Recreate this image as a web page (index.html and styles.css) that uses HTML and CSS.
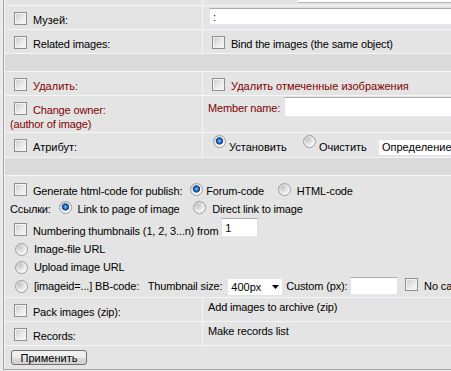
FILE: index.html
```html
<!DOCTYPE html>
<html lang="ru">
<head>
  <meta charset="UTF-8" />
  <meta name="viewport" content="width=device-width, initial-scale=1" />
  <title>Действия с изображениями</title>
  <link rel="stylesheet" href="styles.css">
</head>
<body>
  <div class="panel">
    <form class="opts">
      <div class="cell cut"></div>
      <div class="cell cut"><div class="cut-field"></div></div>

      <div class="cell"><input type="checkbox" class="cb"> Музей:</div>
      <div class="cell"><input type="text" class="txt museum" value=":"></div>

      <div class="cell" lang="en"><input type="checkbox" class="cb"> Related images:</div>
      <div class="cell" lang="en"><input type="checkbox" class="cb"> Bind the images (the same object)</div>

      <div class="cell blank"></div>

      <div class="cell red"><input type="checkbox" class="cb"> Удалить:</div>
      <div class="cell red"><input type="checkbox" class="cb"> Удалить отмеченные изображения</div>

      <div class="cell red" lang="en"><input type="checkbox" class="cb"> Change owner:<br>(author of image)</div>
      <div class="cell red owner" lang="en">
        <span class="owner-label">Member name:</span>
        <input type="text" class="txt owner-input">
      </div>

      <div class="cell"><input type="checkbox" class="cb"> Атрибут:</div>
      <div class="cell attr"><input type="radio" name="attr" class="rb" checked>Установить&nbsp;&nbsp; <input type="radio" name="attr" class="rb rb-next">Очистить&nbsp;&nbsp; <select class="sel"><option>Определение...</option></select></div>

      <div class="cell blank"></div>

      <div class="cell wide publish" lang="en">
        <div class="line l1"><input type="checkbox" class="cb"> Generate html-code for publish: <input type="radio" name="code" class="rb" checked>Forum-code&nbsp;&nbsp; <input type="radio" name="code" class="rb"> HTML-code</div>
        <div class="line l2">Ссылки: <input type="radio" name="link" class="rb" checked> Link to page of image&nbsp;&nbsp; <input type="radio" name="link" class="rb"> Direct link to image</div>
        <div class="line l3"><input type="checkbox" class="cb"> Numbering thumbnails (1, 2, 3...n) from <input type="text" class="txt num" value="1"></div>
        <div class="line l4"><input type="radio" name="src" class="rb"> Image-file URL</div>
        <div class="line l5"><input type="radio" name="src" class="rb"> Upload image URL</div>
        <div class="line l6"><input type="radio" name="src" class="rb"> [imageid=...] BB-code:&nbsp;&nbsp; Thumbnail size: <span class="size-box"><select class="size-sel"><option>400px</option></select><svg class="caret" width="7" height="4" viewBox="0 0 7 4"><path d="M0 0h7L3.5 4z"/></svg></span> Custom (px): <input type="text" class="txt custom"> <input type="checkbox" class="cb"> No cache</div>
      </div>

      <div class="cell" lang="en"><input type="checkbox" class="cb"> Pack images (zip):</div>
      <div class="cell note" lang="en">Add images to archive (zip)</div>

      <div class="cell" lang="en"><input type="checkbox" class="cb"> Records:</div>
      <div class="cell note" lang="en">Make records list</div>

      <div class="cell wide"><button type="submit" class="btn">Применить</button></div>
    </form>
  </div>
</body>
</html>
```

FILE: styles.css
```css
body {
  margin: 0;
  padding: 0 0 0 3px;
  background: #ececec;
  font-family: "Liberation Sans", Arial, sans-serif;
  font-size: 11px;
  color: #000;
  overflow: hidden;
}

/* english labels come out a bit wide next to the hinted original */
[lang="en"] {
  letter-spacing: -0.15px;
}

.panel {
  width: 620px;
  border-left: 1px solid #a3a3a3;
  border-bottom: 1px solid #a3a3a3;
}

.opts {
  display: grid;
  grid-template-columns: 197px 1fr;
  grid-template-rows: 5px 23px 23px 17px 23px 36px 24px 17px 121px 23px 23px 23px;
  gap: 1px;
  margin: 0;
  padding-left: 1px;
  background: #f5f5f5;
}

.cell {
  background: #e4e4e4;
  padding: 3px 5px 0;
  line-height: 14px;
  white-space: nowrap;
  overflow: hidden;
}

.cut {
  padding: 0;
}

.cut-field {
  margin-left: 95px;
  height: 2px;
  background: #fff;
  border-bottom: 1px solid #b5b5b5;
}

.blank {
  grid-column: 1 / -1;
  background: #dadada;
}

.wide {
  grid-column: 1 / -1;
}

.red {
  color: #800000;
}

.note {
  padding-top: 2px;
}

/* checkboxes and radios, Windows 7 look */
.cb, .rb {
  appearance: none;
  -webkit-appearance: none;
  box-sizing: border-box;
  width: 13px;
  height: 13px;
  margin: 3px 3px 0 4px;
  vertical-align: -1px;
  border: 1px solid #8f8f8f;
  background: linear-gradient(135deg, #c9cbcf 0%, #e9e9e9 55%, #fbfbfb 100%);
  box-shadow: inset 0 0 0 1px #f3f3f3;
}

.rb {
  margin-left: 5px;
  border-radius: 50%;
  border-color: #9c9c9c;
  box-shadow: none;
  background: radial-gradient(circle at 35% 30%, #c4c4c4 0, #e6e6e6 45%, #fdfdfd 80%);
}

.rb:checked {
  background:
    radial-gradient(circle at 50% 45%, #8fd0f7 0, #2c7fd1 1.6px, #103f86 3.3px, transparent 3.9px),
    radial-gradient(circle at 35% 30%, #c4c4c4 0, #e6e6e6 45%, #fdfdfd 80%);
}

.txt {
  box-sizing: border-box;
  margin: 0;
  padding: 0 3px;
  border: 1px solid;
  border-color: #abadb3 #dbdfe6 #e3e9ef #e2e3ea;
  background: #fff;
  font: inherit;
  color: #000;
  outline: none;
}

.museum {
  display: block;
  width: 400px;
  height: 17px;
  margin: -1px 0 0 1px;
}

.owner {
  display: flex;
  align-items: flex-start;
  padding: 1px 0 0 5px;
}

.owner-label {
  margin-top: 4px;
}

.owner-input {
  width: 300px;
  height: 20px;
  margin-left: 4px;
}

.attr {
  padding-top: 2px;
}

.attr .rb {
  margin-top: 0;
  vertical-align: 3px;
}

.attr .rb-next {
  margin-left: 7px;
}

.sel {
  appearance: none;
  -webkit-appearance: none;
  box-sizing: border-box;
  width: 110px;
  height: 17px;
  margin: 0 0 0 2px;
  padding: 0 3px;
  border: 1px solid #e2e3ea;
  border-radius: 0;
  background: #fff;
  font: inherit;
  color: #000;
}

/* publish block */
.publish {
  padding-top: 4px;
}

.line {
  height: 18px;
}

.l2 {
  height: 20px;
}

.l3 {
  height: 24px;
}

.l3 .num {
  width: 37px;
  height: 19px;
  vertical-align: 3px;
}

.l5 {
  height: 17px;
}

.l4 .rb, .l5 .rb, .l6 .rb {
  margin-top: 0;
  vertical-align: -3px;
}

.l6 .cb {
  margin-top: 0;
}

.size-box {
  display: inline-flex;
  align-items: center;
  box-sizing: border-box;
  width: 56px;
  height: 18px;
  margin-left: 2px;
  vertical-align: -1px;
  background: #fff;
  border: 1px solid #e2e3ea;
}

.size-sel {
  appearance: none;
  -webkit-appearance: none;
  width: 43px;
  height: 16px;
  margin: 0;
  padding: 0 0 0 3px;
  border: 0;
  background: transparent;
  font: inherit;
  color: #000;
}

.caret {
  margin-left: 1px;
}

.custom {
  width: 48px;
  height: 18px;
}

.btn {
  display: block;
  box-sizing: border-box;
  width: 76px;
  height: 15px;
  margin: 1px 0 0 1px;
  padding: 0;
  border: 1px solid #707070;
  border-radius: 3px;
  background: linear-gradient(#f2f2f2 0%, #ebebeb 50%, #dddddd 51%, #cfcfcf 100%);
  font: inherit;
  line-height: 12px;
  color: #000;
}
```
